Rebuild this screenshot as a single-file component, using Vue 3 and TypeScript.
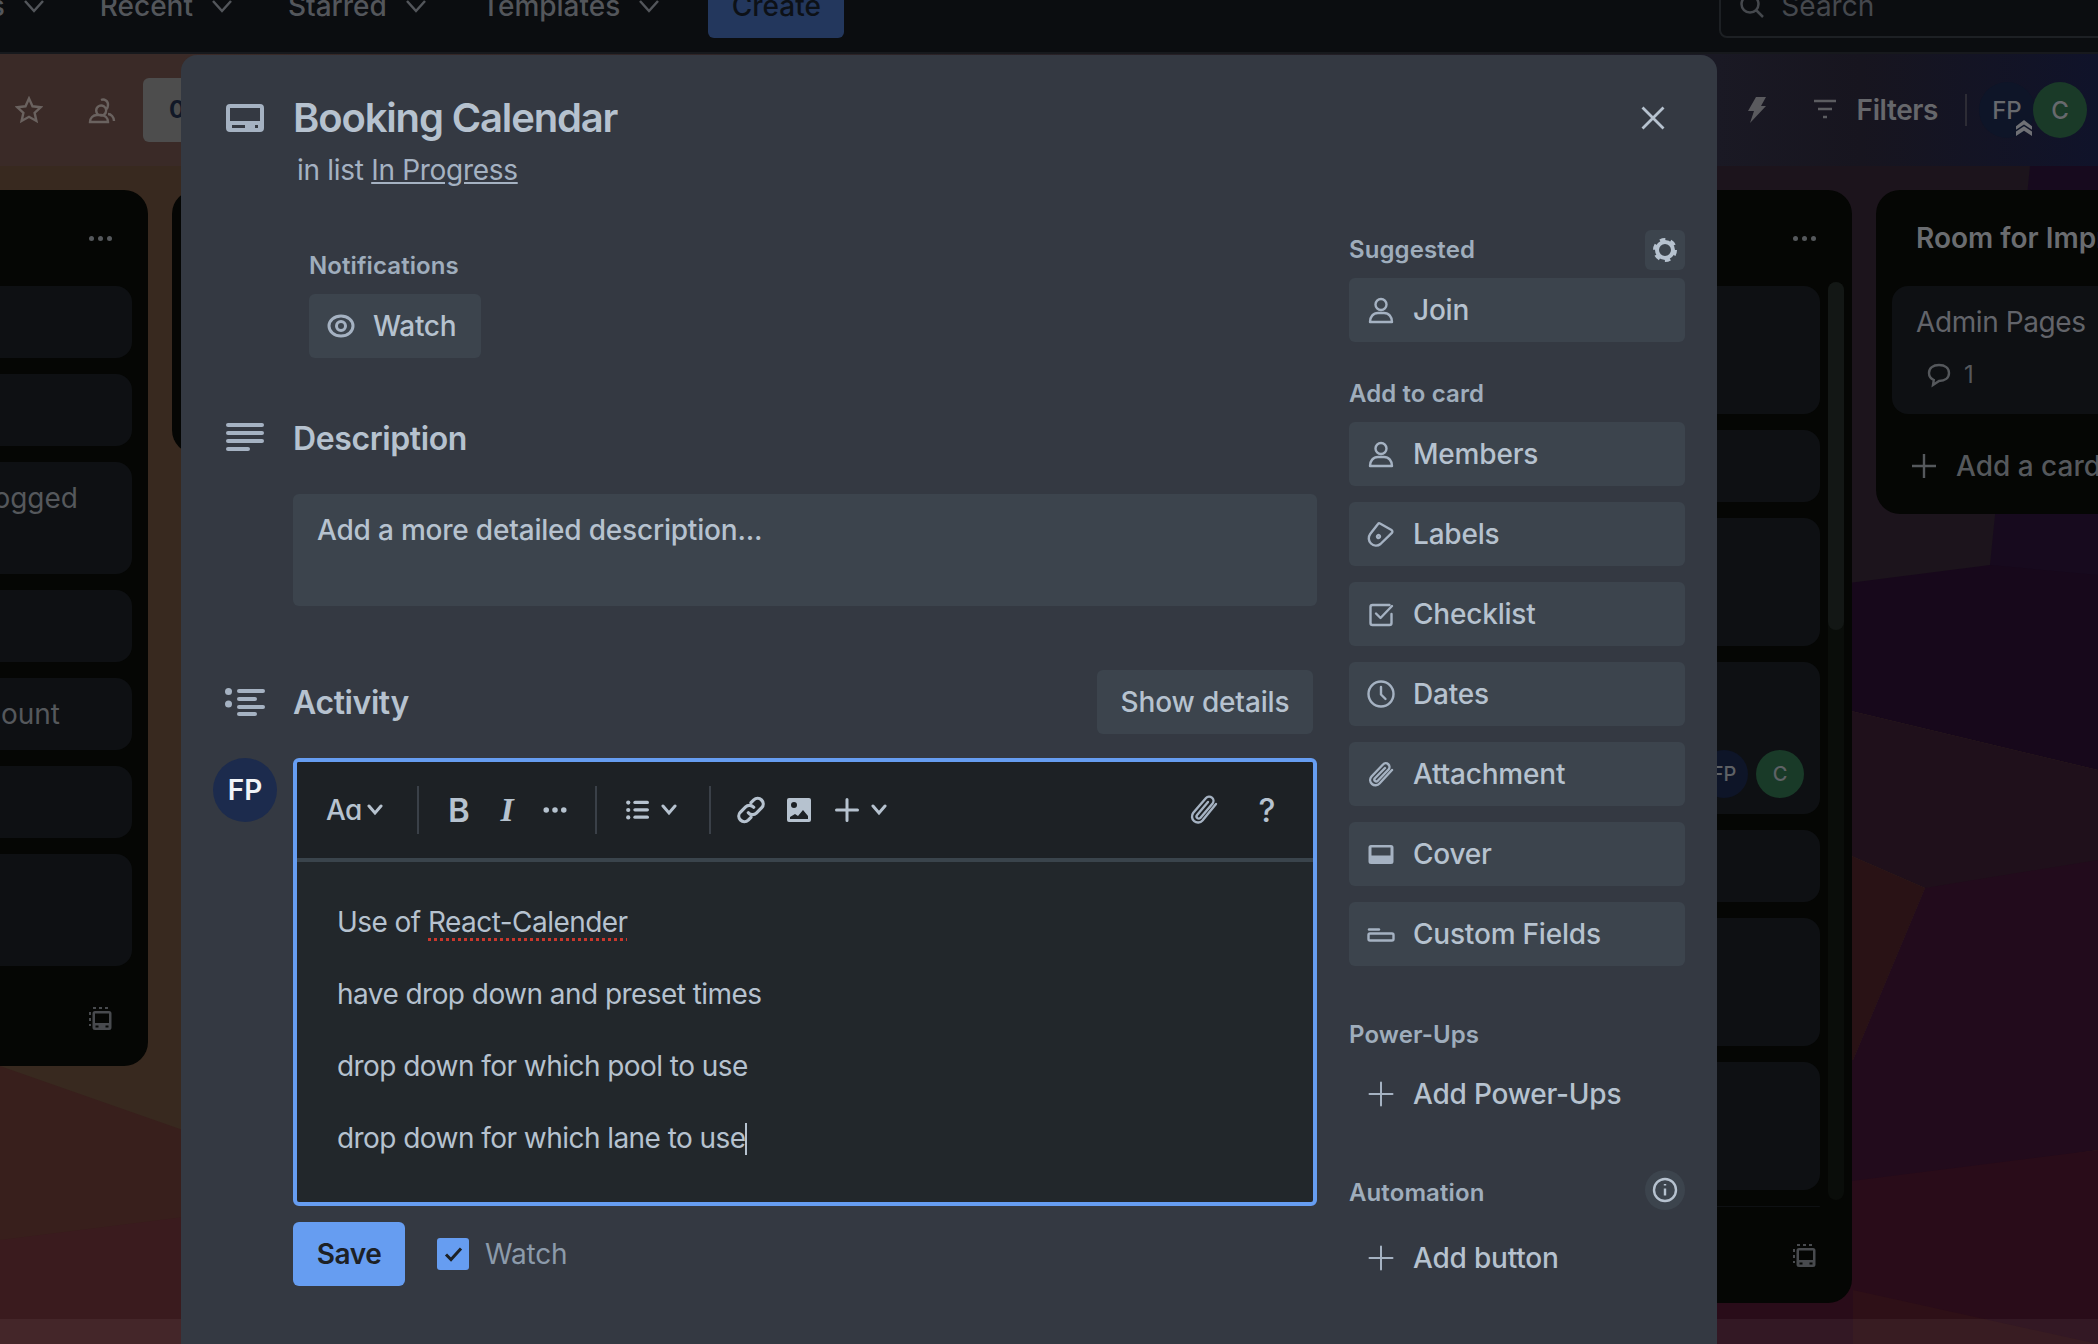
<script setup lang="ts">
interface BoardCard {
  height: number
  text?: string
  textPad?: number
  members?: boolean
}

interface BoardList {
  height: number
  scroll?: boolean
  cards: BoardCard[]
}

interface SideAction {
  label: string
  icon: string
  solid?: boolean
  extra?: string
}

const navItems = ['Recent', 'Starred', 'Templates']

const lists: BoardList[] = [
  {
    height: 876,
    cards: [
      { height: 72 },
      { height: 72 },
      { height: 112, text: 'User logged', textPad: 54 },
      { height: 72 },
      { height: 72, text: 'Delete account', textPad: 72 },
      { height: 72 },
      { height: 112 },
    ],
  },
  { height: 264, cards: [{ height: 72 }] },
  { height: 264, cards: [{ height: 72 }] },
  {
    height: 1113,
    scroll: true,
    cards: [
      { height: 128 },
      { height: 72 },
      { height: 128 },
      { height: 152, members: true },
      { height: 72 },
      { height: 128 },
      { height: 128 },
      { height: 1 },
    ],
  },
]

const personIcon = 'M16 5a5 5 0 1 1 0 11 5 5 0 0 1 0-11Z M5 28c0-5 3-9 8-9h6c5 0 8 4 8 9Z'
const plusIcon = 'M16 4.500v23M4.500 16h23'

const cardActions: SideAction[] = [
  { label: 'Members', icon: personIcon },
  {
    label: 'Labels',
    icon: 'M15 5.500 26.500 12a1.800 1.800 0 0 1 .4 2.800L15.500 26a7 7 0 0 1-9.500-.5 7.200 7.200 0 0 1-.8-9.500L13 6a1.600 1.600 0 0 1 2-.5Z',
    extra: 'M12 18.500a1.500 1.500 0 1 1 0 .1Z',
  },
  {
    label: 'Checklist',
    icon: 'M26.500 16v9a2 2 0 0 1-2 2H7.500a2 2 0 0 1-2-2V9a2 2 0 0 1 2-2h17',
    extra: 'M11 15.500l4.500 4.500L27 8',
  },
  { label: 'Dates', icon: 'M16 3.500a12.500 12.500 0 1 1 0 25 12.500 12.500 0 0 1 0-25Z', extra: 'M16 9v7.500l4.500 4.500' },
  {
    label: 'Attachment',
    icon: 'M27 12 14.500 25.500a5.300 5.300 0 0 1-8-7L18 6.500a3.700 3.700 0 0 1 5.500 5L12.500 23a1.900 1.900 0 0 1-2.800-2.500L20 10',
  },
  {
    label: 'Cover',
    solid: true,
    icon: 'M6 7h20a2.500 2.500 0 0 1 2.500 2.500v14A2.500 2.500 0 0 1 26 26H6a2.500 2.500 0 0 1-2.500-2.500v-14A2.500 2.500 0 0 1 6 7Zm.5 2.500v8h19v-8Z',
  },
  { label: 'Custom Fields', icon: 'M4 11.500h10', extra: 'M5 15.500h22a1.500 1.500 0 0 1 1.500 1.500v4a1.500 1.500 0 0 1-1.500 1.500H5A1.500 1.500 0 0 1 3.500 21v-4A1.500 1.500 0 0 1 5 15.500Z' },
]

const editorLines = ['have drop down and preset times', 'drop down for which pool to use']
</script>

<template>
  <div class="page">
    <!-- board background, only seen at the sides of the dialog -->
    <svg class="wallpaper" viewBox="0 0 2098 1344" preserveAspectRatio="none">
      <rect x="0" y="0" width="2098" height="1344" fill="#38291f" />
      <polygon points="0,1066 240,1150 240,1344 0,1344" fill="#381f1c" />
      <polygon points="0,1240 240,1210 240,1344 0,1344" fill="#3a1b1e" />
      <polygon points="1700,166 2098,166 2098,620 1700,620" fill="#1c141c" />
      <polygon points="2030,166 2098,166 2098,600 1990,565" fill="#170a1e" />
      <polygon points="1700,602 1990,565 2098,575 2098,770 1700,675" fill="#17081b" />
      <polygon points="1700,675 2098,770 2098,880 1925,888 1700,790" fill="#1f101b" />
      <polygon points="1700,790 1925,888 1853,1060 1700,1060" fill="#291215" />
      <polygon points="1925,888 2098,860 2098,1150 1700,1210 1700,1060 1853,1060" fill="#220b1c" />
      <polygon points="1700,1200 2098,1150 2098,1344 1700,1344" fill="#290c19" />
      <polygon points="1853,1290 2098,1344 1853,1344" fill="#2e1017" />
    </svg>

    <header class="topbar">
      <div class="topbar-row">
        <div class="nav-item first">
          <span>Workspaces</span>
          <svg class="chev" viewBox="0 0 22 14"><path d="M2 2l9 10 9-10" /></svg>
        </div>
        <div v-for="item in navItems" :key="item" class="nav-item">
          <span>{{ item }}</span>
          <svg class="chev" viewBox="0 0 22 14"><path d="M2 2l9 10 9-10" /></svg>
        </div>
        <div class="create">Create</div>
        <div class="search">
          <svg class="search-icon" viewBox="0 0 26 26"><path d="M11 2.500a8.500 8.500 0 1 1 0 17 8.500 8.500 0 0 1 0-17ZM17 17l7 7" /></svg>
          <span>Search</span>
        </div>
      </div>
    </header>

    <div class="boardbar">
      <svg class="bar-icon star" viewBox="0 0 28 28"><path d="M14 2.500l3.500 7.800 8.300.9-6.200 5.600 1.800 8.200L14 20.800 6.600 25l1.800-8.200-6.200-5.600 8.300-.9Z" /></svg>
      <svg class="bar-icon people" viewBox="0 0 28 28"><path d="M11 10a5 5 0 1 1 0 9 5 5 0 0 1 0-9ZM2 26c0-4 3-7 7-7h4c4 0 7 3 7 7ZM13 4a5 5 0 0 1 7 5c0 3-1 4-2 5M20 18c3 0 6 3 6 7" /></svg>
      <div class="views"><span>00</span></div>
      <div class="bar-right">
        <svg class="bolt" viewBox="0 0 20 26"><path d="M9 0h10l-5 9h5L3 26l4-12H1Z" /></svg>
        <svg class="filter" viewBox="0 0 24 22"><path d="M1 2h22M5 10h14M10 18h4" /></svg>
        <span class="filters">Filters</span>
        <i class="bar-sep"></i>
        <div class="bar-avatars">
          <div class="bar-avatar fp">FP
            <svg class="admin" viewBox="0 0 18 18"><path d="M9 0l9 7v4L9 5l-9 6V7Zm0 7l9 6v5l-9-6-9 6v-5Z" /></svg>
          </div>
          <div class="bar-avatar c">C</div>
        </div>
      </div>
    </div>

    <div class="lists">
      <section
        v-for="(list, i) in lists"
        :key="i"
        class="list"
        :style="{ height: list.height + 'px', paddingRight: list.scroll ? '32px' : '16px' }"
      >
        <div class="list-head">
          <span class="dots" :style="{ marginRight: list.scroll ? '4px' : '20px' }"><b></b><b></b><b></b></span>
        </div>
        <div class="cards">
          <div
            v-for="(card, j) in list.cards"
            :key="j"
            class="card"
            :style="{ height: card.height + 'px', paddingRight: (card.textPad ?? 16) + 'px' }"
          >
            <span v-if="card.text" class="card-text">{{ card.text }}</span>
            <div v-if="card.members" class="card-members">
              <span class="mini fp">FP</span>
              <span class="mini c">C</span>
            </div>
          </div>
        </div>
        <div class="list-foot" :style="{ paddingRight: list.scroll ? '4px' : '20px' }">
          <svg class="template" viewBox="0 0 24 24">
            <path class="tpl-dash" d="M5 2h3M11 2h3M17 2h3M2 6v3M2 12v3M2 18v2" />
            <path fill-rule="evenodd" d="M7 5h14a2.500 2.500 0 0 1 2.500 2.500v14A2.500 2.500 0 0 1 21 24H7a2.500 2.500 0 0 1-2.500-2.500v-14A2.500 2.500 0 0 1 7 5Zm0 2.500v9.500h14V7.500ZM7.500 19.500v2h3v-2Zm10 0v2h3v-2Z" />
          </svg>
        </div>
        <div v-if="list.scroll" class="scrolltrack"><div class="scrollthumb"></div></div>
      </section>

      <section class="list room">
        <div class="room-title">Room for Improvements</div>
        <div class="room-card">
          <div class="room-name">Admin Pages</div>
          <div class="room-badge">
            <svg viewBox="0 0 26 26"><path d="M13 3c6 0 10 3 10 8s-4 8-10 8l-6 4 .8-5C4.500 16.500 3 14 3 11c0-5 4-8 10-8Z" /></svg>
            <span>1</span>
          </div>
        </div>
        <div class="room-add">
          <svg viewBox="0 0 24 24"><path d="M12 0v24M0 12h24" /></svg>
          <span>Add a card</span>
        </div>
      </section>
    </div>

    <div class="hscroll"></div>

    <!-- card dialog -->
    <div class="modal">
      <div class="title-row">
        <div class="gutter">
          <svg class="head-icon" viewBox="0 0 38 28">
            <path fill-rule="evenodd" d="M4 0h30a4 4 0 0 1 4 4v20a4 4 0 0 1-4 4H4a4 4 0 0 1-4-4V4a4 4 0 0 1 4-4Zm0 4v13h30V4ZM6 21v3h13v-3Zm23 0v3h3v-3Z" />
          </svg>
        </div>
        <div class="title-text">
          <h1>Booking Calendar</h1>
          <p>in list <u>In Progress</u></p>
        </div>
        <button class="close">
          <svg viewBox="0 0 26 26"><path d="M2.500 2.500l21 21M23.500 2.500l-21 21" /></svg>
        </button>
      </div>

      <div class="columns">
        <div class="main">
          <div class="notifications">
            <div class="label">Notifications</div>
            <button class="btn watch">
              <svg class="eye" viewBox="0 0 28 24">
                <ellipse cx="14" cy="12" rx="12" ry="10" />
                <circle cx="14" cy="12" r="4.500" />
              </svg>
              Watch
            </button>
          </div>

          <div class="sec-head desc-head">
            <div class="gutter">
              <svg class="head-icon" viewBox="0 0 38 32">
                <rect y="1" width="38" height="4" rx="2" />
                <rect y="9" width="38" height="4" rx="2" />
                <rect y="17" width="38" height="4" rx="2" />
                <rect y="25" width="24" height="4" rx="2" />
              </svg>
            </div>
            <h2>Description</h2>
          </div>
          <div class="desc-box">Add a more detailed description...</div>

          <div class="sec-head activity-head">
            <div class="gutter">
              <svg class="head-icon" viewBox="0 0 40 28">
                <circle cx="3.500" cy="3.500" r="3.500" />
                <circle cx="3.500" cy="16" r="3.500" />
                <rect x="12" y="1" width="28" height="4" rx="2" />
                <rect x="12" y="9" width="20" height="4" rx="2" />
                <rect x="12" y="17" width="28" height="4" rx="2" />
                <rect x="12" y="24" width="20" height="4" rx="2" />
              </svg>
            </div>
            <h2>Activity</h2>
            <button class="btn details">Show details</button>
          </div>

          <div class="comment-row">
            <div class="avatar">FP</div>
            <div class="editor">
              <div class="toolbar">
                <div class="tool-font">
                  <span class="aa">Aɑ</span>
                  <svg class="tool-chev" viewBox="0 0 16 12"><path d="M2 2l6 7 6-7" /></svg>
                </div>
                <i class="tool-sep"></i>
                <div class="tool glyph-b">B</div>
                <div class="tool glyph-i">I</div>
                <div class="tool">
                  <svg class="tool-svg" viewBox="0 0 26 26"><circle cx="3.500" cy="13" r="3" /><circle cx="13" cy="13" r="3" /><circle cx="22.500" cy="13" r="3" /></svg>
                </div>
                <i class="tool-sep"></i>
                <div class="tool">
                  <svg class="tool-svg" viewBox="0 0 26 26"><circle cx="3.500" cy="5" r="2.300" /><circle cx="3.500" cy="13" r="2.300" /><circle cx="3.500" cy="21" r="2.300" /><rect x="9" y="3" width="17" height="3.600" rx="1.800" /><rect x="9" y="11" width="17" height="3.600" rx="1.800" /><rect x="9" y="19" width="17" height="3.600" rx="1.800" /></svg>
                </div>
                <svg class="tool-chev list-chev" viewBox="0 0 16 12"><path d="M2 2l6 7 6-7" /></svg>
                <i class="tool-sep"></i>
                <div class="tool">
                  <svg class="tool-svg line link" viewBox="0 0 28 28"><path d="M11.500 16.500a5 5 0 0 0 7.500.4l5-5a5.200 5.200 0 0 0-7.400-7.300l-2.600 2.600M16.500 11.500a5 5 0 0 0-7.500-.4l-5 5a5.200 5.200 0 0 0 7.400 7.300l2.600-2.600" /></svg>
                </div>
                <div class="tool">
                  <svg class="tool-svg" viewBox="0 0 24 24">
                    <path fill-rule="evenodd" d="M2 0h20a2 2 0 0 1 2 2v20a2 2 0 0 1-2 2H2a2 2 0 0 1-2-2V2a2 2 0 0 1 2-2Zm5 4a3 3 0 1 0 0 6 3 3 0 0 0 0-6ZM3 21h18v-3l-5-6-5 6-3-2-5 3Z" />
                  </svg>
                </div>
                <div class="tool">
                  <svg class="tool-svg line" viewBox="0 0 24 24"><path d="M12 1.500v21M1.500 12h21" /></svg>
                </div>
                <svg class="tool-chev" viewBox="0 0 16 12"><path d="M2 2l6 7 6-7" /></svg>
                <div class="tool-end">
                  <svg class="clip" viewBox="0 0 30 32"><path d="M27 10 13.500 26.500a6 6 0 0 1-9.200-7.700L17 4a4.300 4.300 0 0 1 6.600 5.500L11.500 23.800a2.200 2.200 0 0 1-3.400-2.800L19 8" /></svg>
                  <span class="help">?</span>
                </div>
              </div>
              <div class="editor-body">
                <p>Use of <span class="misspelt">React-Calender</span></p>
                <p v-for="line in editorLines" :key="line">{{ line }}</p>
                <p>drop down for which lane to use<i class="caret"></i></p>
              </div>
            </div>
          </div>

          <div class="save-row">
            <button class="save">Save</button>
            <span class="check">
              <svg viewBox="0 0 32 32"><path d="M9 16.500l5 5 10-11" /></svg>
            </span>
            <span class="watch-label">Watch</span>
          </div>
        </div>

        <aside class="side">
          <div class="side-label first-label">
            <span>Suggested</span>
            <span class="mini-btn">
              <svg viewBox="0 0 26 26">
                <circle class="gear-ring" cx="13" cy="13" r="8" />
                <circle class="gear-teeth" cx="13" cy="13" r="10.500" />
              </svg>
            </span>
          </div>
          <button class="btn action">
            <svg class="action-icon" viewBox="0 0 32 32"><path :d="personIcon" /></svg>
            Join
          </button>

          <div class="side-label add-label">Add to card</div>
          <div class="action-list">
            <button v-for="a in cardActions" :key="a.label" class="btn action">
              <svg class="action-icon" :class="{ solid: a.solid }" viewBox="0 0 32 32">
                <path :d="a.icon" fill-rule="evenodd" />
                <path v-if="a.extra" :d="a.extra" />
              </svg>
              {{ a.label }}
            </button>
          </div>

          <div class="side-label power-label">Power-Ups</div>
          <button class="action plain">
            <svg class="action-icon thin" viewBox="0 0 32 32"><path :d="plusIcon" /></svg>
            Add Power-Ups
          </button>

          <div class="side-label auto-label">
            <span class="auto-text">Automation</span>
            <span class="mini-btn round">
              <svg viewBox="0 0 26 26">
                <circle class="info-ring" cx="13" cy="13" r="11" />
                <path class="info-i" d="M13 11.500v7M13 7v1.500" />
              </svg>
            </span>
          </div>
          <button class="action plain button-add">
            <svg class="action-icon thin" viewBox="0 0 32 32"><path :d="plusIcon" /></svg>
            Add button
          </button>
        </aside>
      </div>
    </div>
  </div>
</template>

<style scoped>
.page {
  position: relative;
  width: 2098px;
  height: 1344px;
  overflow: hidden;
  font-family: Inter, "Liberation Sans", sans-serif;
  color: #b6c2cf;
}

.wallpaper {
  position: absolute;
  inset: 0;
  width: 2098px;
  height: 1344px;
}

button {
  border: 0;
  font-family: inherit;
  cursor: pointer;
}

/* top bar */
.topbar {
  position: relative;
  height: 54px;
  box-sizing: border-box;
  overflow: hidden;
  background: #0b0d10;
  border-bottom: 2px solid #17191d;
}

.topbar-row {
  display: flex;
  align-items: center;
  height: 64px;
  margin-top: -26px;
  margin-left: -162px;
}

.nav-item {
  display: flex;
  align-items: center;
  gap: 18px;
  margin-right: 55px;
  font-size: 28px;
  font-weight: 500;
  color: #53565b;
  white-space: nowrap;
}

.chev {
  width: 22px;
  height: 14px;
  fill: none;
  stroke: #53565b;
  stroke-width: 2.500;
}

.create {
  display: flex;
  align-items: center;
  justify-content: center;
  flex: none;
  width: 136px;
  height: 64px;
  margin-left: -7px;
  background: #23375d;
  border-radius: 6px;
  font-size: 28px;
  font-weight: 500;
  color: #0d1117;
}

.search {
  display: flex;
  align-items: center;
  gap: 16px;
  flex: none;
  width: 600px;
  height: 64px;
  margin-left: 875px;
  padding-left: 18px;
  border: 2px solid #1d2024;
  border-radius: 8px;
  box-sizing: border-box;
  font-size: 28px;
  color: #45484d;
}

.search-icon {
  width: 26px;
  height: 26px;
  fill: none;
  stroke: #45484d;
  stroke-width: 2.500;
}

/* board bar */
.boardbar {
  position: relative;
  display: flex;
  align-items: center;
  height: 112px;
  padding-left: 15px;
  box-sizing: border-box;
  background: linear-gradient(90deg, #3a2a27 0, #3a2a27 181px, #1a1924 1717px, #17151f 1860px, #10132a 2098px);
}

.bar-icon {
  width: 28px;
  height: 28px;
  fill: none;
  stroke: #6a625f;
  stroke-width: 2.400;
  margin-right: 45px;
}

.views {
  width: 200px;
  height: 64px;
  margin-left: -18px;
  padding-left: 26px;
  box-sizing: border-box;
  background: #4d4d4d;
  border-radius: 6px;
  font-size: 24px;
  font-weight: 700;
  line-height: 64px;
  color: #111827;
}

.bar-right {
  display: flex;
  align-items: center;
  margin-left: auto;
  padding-right: 11px;
}

.bolt {
  width: 20px;
  height: 26px;
  fill: #5a5a5e;
  margin-right: 46px;
}

.filter {
  width: 24px;
  height: 22px;
  fill: none;
  stroke: #5c5d61;
  stroke-width: 2.500;
  margin-right: 20px;
}

.filters {
  font-size: 28px;
  font-weight: 600;
  letter-spacing: -0.4px;
  color: #66676b;
}

.bar-sep {
  width: 2px;
  height: 32px;
  margin: 0 12px 0 27px;
  background: #2d2c35;
}

.bar-avatars {
  display: flex;
}

.bar-avatar {
  position: relative;
  display: flex;
  align-items: center;
  justify-content: center;
  width: 56px;
  height: 56px;
  border-radius: 50%;
  font-size: 24px;
  font-weight: 500;
  color: #67696d;
}

.bar-avatar.fp {
  background: #0e1528;
}

.bar-avatar.c {
  width: 54px;
  margin-left: -2px;
  background: #1a3a28;
}

.admin {
  position: absolute;
  right: 2px;
  bottom: 2px;
  width: 18px;
  height: 16px;
  fill: #6f7075;
}

/* lists */
.lists {
  position: relative;
  display: flex;
  align-items: flex-start;
  gap: 24px;
  margin-top: 24px;
  margin-left: -396px;
}

.list {
  position: relative;
  display: flex;
  flex-direction: column;
  flex: none;
  width: 544px;
  padding-left: 16px;
  box-sizing: border-box;
  background: #050604;
  border-radius: 24px;
}

.list-head {
  display: flex;
  align-items: center;
  justify-content: flex-end;
  height: 96px;
}

.dots {
  display: flex;
  gap: 4px;
}

.dots b {
  width: 5px;
  height: 5px;
  border-radius: 50%;
  background: #55585c;
}

.cards {
  display: flex;
  flex-direction: column;
  gap: 16px;
}

.card {
  display: flex;
  align-items: flex-start;
  justify-content: flex-end;
  box-sizing: border-box;
  background: #0e1013;
  border-radius: 16px;
  overflow: hidden;
}

.card-text {
  margin-top: 16px;
  font-size: 28px;
  line-height: 40px;
  color: #55585c;
  white-space: nowrap;
}

.card-members {
  display: flex;
  gap: 8px;
  margin-top: auto;
  margin-bottom: 16px;
}

.mini {
  display: flex;
  align-items: center;
  justify-content: center;
  width: 48px;
  height: 48px;
  border-radius: 50%;
  font-size: 20px;
  font-weight: 500;
  color: #5e6165;
}

.mini.fp {
  background: #0e1528;
}

.mini.c {
  background: #193a28;
}

.list-foot {
  display: flex;
  justify-content: flex-end;
  margin-top: auto;
  padding-bottom: 36px;
}

.template {
  width: 24px;
  height: 24px;
  fill: #484a4e;
}

.tpl-dash {
  fill: none;
  stroke: #484a4e;
  stroke-width: 2;
}

.scrolltrack {
  position: absolute;
  top: 92px;
  right: 8px;
  width: 16px;
  height: 918px;
  background: #0a0d0a;
  border-radius: 8px;
}

.scrollthumb {
  height: 348px;
  background: #131715;
  border-radius: 8px;
}

.room {
  height: 324px;
  padding-right: 16px;
}

.room-title {
  display: flex;
  align-items: center;
  height: 96px;
  padding-left: 24px;
  font-size: 28px;
  font-weight: 600;
  color: #6a6c70;
  white-space: nowrap;
}

.room-card {
  height: 128px;
  padding: 16px 24px;
  box-sizing: border-box;
  background: #0e1013;
  border-radius: 16px;
}

.room-name {
  font-size: 28px;
  line-height: 40px;
  letter-spacing: -0.4px;
  color: #62646a;
}

.room-badge {
  display: flex;
  align-items: center;
  gap: 12px;
  margin-top: 18px;
  margin-left: 10px;
  font-size: 24px;
  color: #55585c;
}

.room-badge svg {
  width: 26px;
  height: 26px;
  fill: none;
  stroke: #55585c;
  stroke-width: 2.400;
}

.room-add {
  display: flex;
  align-items: center;
  gap: 20px;
  height: 72px;
  margin-top: 16px;
  padding-left: 20px;
  font-size: 28px;
  font-weight: 500;
  color: #55585c;
}

.room-add svg {
  width: 24px;
  height: 24px;
  flex: none;
  fill: none;
  stroke: #55585c;
  stroke-width: 2.400;
}

.hscroll {
  position: absolute;
  left: 0;
  right: 0;
  bottom: 0;
  height: 25px;
  background: rgba(255, 255, 255, 0.05);
}

/* dialog */
.modal {
  position: absolute;
  top: 55px;
  left: 181px;
  width: 1536px;
  height: 1320px;
  padding: 39px 32px 0;
  box-sizing: border-box;
  background: #343942;
  border-radius: 16px;
}

.title-row {
  display: flex;
  align-items: flex-start;
}

.gutter {
  display: flex;
  justify-content: center;
  align-items: center;
  flex: none;
  width: 64px;
  margin-right: 16px;
}

.title-row .gutter {
  height: 48px;
}

.head-icon {
  fill: #a5b2c2;
}

.title-row .head-icon {
  width: 38px;
  height: 28px;
}

.title-text h1 {
  margin: 0;
  font-size: 40px;
  line-height: 48px;
  font-weight: 600;
  letter-spacing: -1.15px;
  color: #b6c2cf;
}

.title-text p {
  margin: 0;
  padding-left: 4px;
  padding-top: 8px;
  font-size: 28px;
  line-height: 40px;
  letter-spacing: -0.3px;
  color: #a5b2c2;
}

.close {
  display: flex;
  align-items: center;
  justify-content: center;
  width: 64px;
  height: 48px;
  margin-left: auto;
  padding: 0;
  background: none;
}

.close svg {
  width: 26px;
  height: 26px;
  fill: none;
  stroke: #b6c2cf;
  stroke-width: 2.800;
}

.columns {
  display: flex;
  gap: 32px;
  margin-top: 40px;
}

.main {
  width: 1104px;
  padding-top: 20px;
}

.label,
.side-label {
  font-size: 24px;
  line-height: 32px;
  font-weight: 600;
  letter-spacing: 0.1px;
  color: #9fadbc;
}

.notifications {
  margin-left: 96px;
}

.label {
  margin-bottom: 12px;
}

.btn {
  display: flex;
  align-items: center;
  height: 64px;
  background: #3c444d;
  border-radius: 6px;
  font-size: 28px;
  font-weight: 500;
  letter-spacing: -0.15px;
  color: #b6c2cf;
}

.watch {
  width: 172px;
  padding: 0 0 0 18px;
  gap: 18px;
  letter-spacing: -0.3px;
}

.eye {
  width: 28px;
  height: 24px;
  fill: none;
  stroke: #a5b2c2;
  stroke-width: 3;
}

.sec-head {
  display: flex;
  align-items: center;
}

.sec-head h2 {
  margin: 0;
  font-size: 32px;
  font-weight: 600;
  letter-spacing: -0.4px;
  color: #b6c2cf;
}

.desc-head {
  height: 40px;
  margin-top: 60px;
}

.desc-head .head-icon {
  width: 38px;
  height: 32px;
}

.desc-box {
  height: 112px;
  margin-top: 36px;
  margin-left: 80px;
  padding: 16px 24px;
  box-sizing: border-box;
  background: #3c444d;
  border-radius: 6px;
  font-size: 28px;
  line-height: 40px;
  font-weight: 500;
  letter-spacing: -0.2px;
  color: #b6c2cf;
}

.activity-head {
  height: 64px;
  margin-top: 64px;
}

.activity-head .head-icon {
  width: 40px;
  height: 28px;
}

.details {
  justify-content: center;
  width: 216px;
  margin-left: auto;
  margin-right: 4px;
  padding: 0;
}

.comment-row {
  display: flex;
  gap: 16px;
  margin-top: 24px;
}

.avatar {
  display: flex;
  align-items: center;
  justify-content: center;
  flex: none;
  width: 64px;
  height: 64px;
  border-radius: 50%;
  background: #1c2b4d;
  font-size: 28px;
  font-weight: 600;
  color: #f1f4f8;
}

.editor {
  flex: 1;
  height: 448px;
  border: 4px solid #669df1;
  border-radius: 6px;
  box-sizing: border-box;
  background: #22272b;
  overflow: hidden;
}

.toolbar {
  display: flex;
  align-items: center;
  height: 100px;
  padding: 0 34px 0 21px;
  box-sizing: border-box;
  border-bottom: 4px solid #3a444c;
  background: #1d2125;
}

.tool-font {
  display: flex;
  align-items: center;
  gap: 5px;
  width: 83px;
  padding-left: 8px;
  box-sizing: border-box;
}

.aa {
  font-size: 28px;
  font-weight: 500;
  letter-spacing: -0.8px;
  color: #b6c2cf;
}

.tool-chev {
  flex: none;
  width: 16px;
  height: 12px;
  fill: none;
  stroke: #b6c2cf;
  stroke-width: 3;
  stroke-linecap: round;
}

.list-chev {
  margin-right: 16px;
}

.tool-sep {
  width: 2px;
  height: 48px;
  margin: 0 16px;
  background: #3a4048;
}

.tool {
  display: flex;
  align-items: center;
  justify-content: center;
  width: 48px;
  height: 48px;
  flex: none;
  color: #b6c2cf;
}

.glyph-b {
  font-size: 33px;
  font-weight: 600;
}

.glyph-i {
  font-family: "Liberation Serif", serif;
  font-size: 34px;
  font-style: italic;
  font-weight: 700;
}

.tool-svg {
  width: 24px;
  height: 24px;
  fill: #b6c2cf;
}

.tool-svg.line {
  fill: none;
  stroke: #b6c2cf;
  stroke-width: 3;
  stroke-linecap: round;
}

.tool-svg.link {
  width: 30px;
  height: 30px;
}

.tool-end {
  display: flex;
  align-items: center;
  margin-left: auto;
}

.clip {
  width: 30px;
  height: 32px;
  margin-right: 36px;
  fill: none;
  stroke: #a5b2c2;
  stroke-width: 2.400;
  stroke-linecap: round;
}

.help {
  width: 24px;
  font-size: 32px;
  font-weight: 500;
  text-align: center;
  color: #b6c2cf;
}

.editor-body {
  padding: 40px 40px 0;
  font-size: 28px;
  line-height: 40px;
  letter-spacing: -0.55px;
  color: #b6c2cf;
}

.editor-body p {
  margin: 0 0 32px;
}

.misspelt {
  text-decoration: underline dotted #c9372c 3px;
  text-underline-offset: 6px;
}

.caret {
  display: inline-block;
  width: 2px;
  height: 32px;
  margin-left: -1px;
  vertical-align: -7px;
  background: #b6c2cf;
}

.save-row {
  display: flex;
  align-items: center;
  margin-top: 16px;
  margin-left: 80px;
}

.save {
  width: 112px;
  height: 64px;
  padding: 0;
  background: #669df1;
  border-radius: 6px;
  font-size: 28px;
  font-weight: 600;
  letter-spacing: -0.4px;
  color: #1d2125;
}

.check {
  display: flex;
  width: 32px;
  height: 32px;
  margin-left: 32px;
  background: #669df1;
  border-radius: 3px;
}

.check svg {
  fill: none;
  stroke: #1d2125;
  stroke-width: 3;
}

.watch-label {
  margin-left: 16px;
  font-size: 28px;
  letter-spacing: -0.2px;
  color: #8c9bab;
}

.side {
  width: 336px;
}

.side-label {
  display: flex;
  align-items: center;
  justify-content: space-between;
}

.first-label {
  height: 40px;
  margin-bottom: 8px;
}

.add-label {
  margin-top: 36px;
  margin-bottom: 12px;
}

.power-label {
  margin-top: 53px;
  margin-bottom: 11px;
}

.auto-label {
  height: 40px;
  margin-top: 44px;
  margin-bottom: 16px;
}

.auto-text {
  padding-top: 6px;
}

.mini-btn {
  display: flex;
  align-items: center;
  justify-content: center;
  width: 40px;
  height: 40px;
  background: #3c444d;
  border-radius: 6px;
}

.mini-btn.round {
  border-radius: 50%;
}

.mini-btn svg {
  width: 26px;
  height: 26px;
  fill: none;
}

.gear-ring {
  stroke: #b6c2cf;
  stroke-width: 4;
}

.gear-teeth {
  stroke: #b6c2cf;
  stroke-width: 3;
  stroke-dasharray: 5.500 5.500;
}

.info-ring {
  stroke: #b6c2cf;
  stroke-width: 2.400;
}

.info-i {
  stroke: #b6c2cf;
  stroke-width: 2.400;
}

.action-list {
  display: flex;
  flex-direction: column;
  gap: 16px;
}

.action {
  display: flex;
  align-items: center;
  gap: 16px;
  width: 336px;
  height: 64px;
  padding: 0 0 0 16px;
  box-sizing: border-box;
  font-size: 28px;
  font-weight: 500;
  letter-spacing: -0.2px;
  color: #b6c2cf;
}

.action.plain {
  background: none;
}

.action-icon {
  flex: none;
  width: 32px;
  height: 32px;
  fill: none;
  stroke: #a5b2c2;
  stroke-width: 2.400;
  stroke-linejoin: round;
  stroke-linecap: round;
}

.action-icon.solid {
  fill: #a5b2c2;
  stroke: none;
}

.action-icon.thin {
  stroke-width: 2;
}
</style>

<style>
body {
  margin: 0;
  background: #000;
  overflow: hidden;
}
</style>
